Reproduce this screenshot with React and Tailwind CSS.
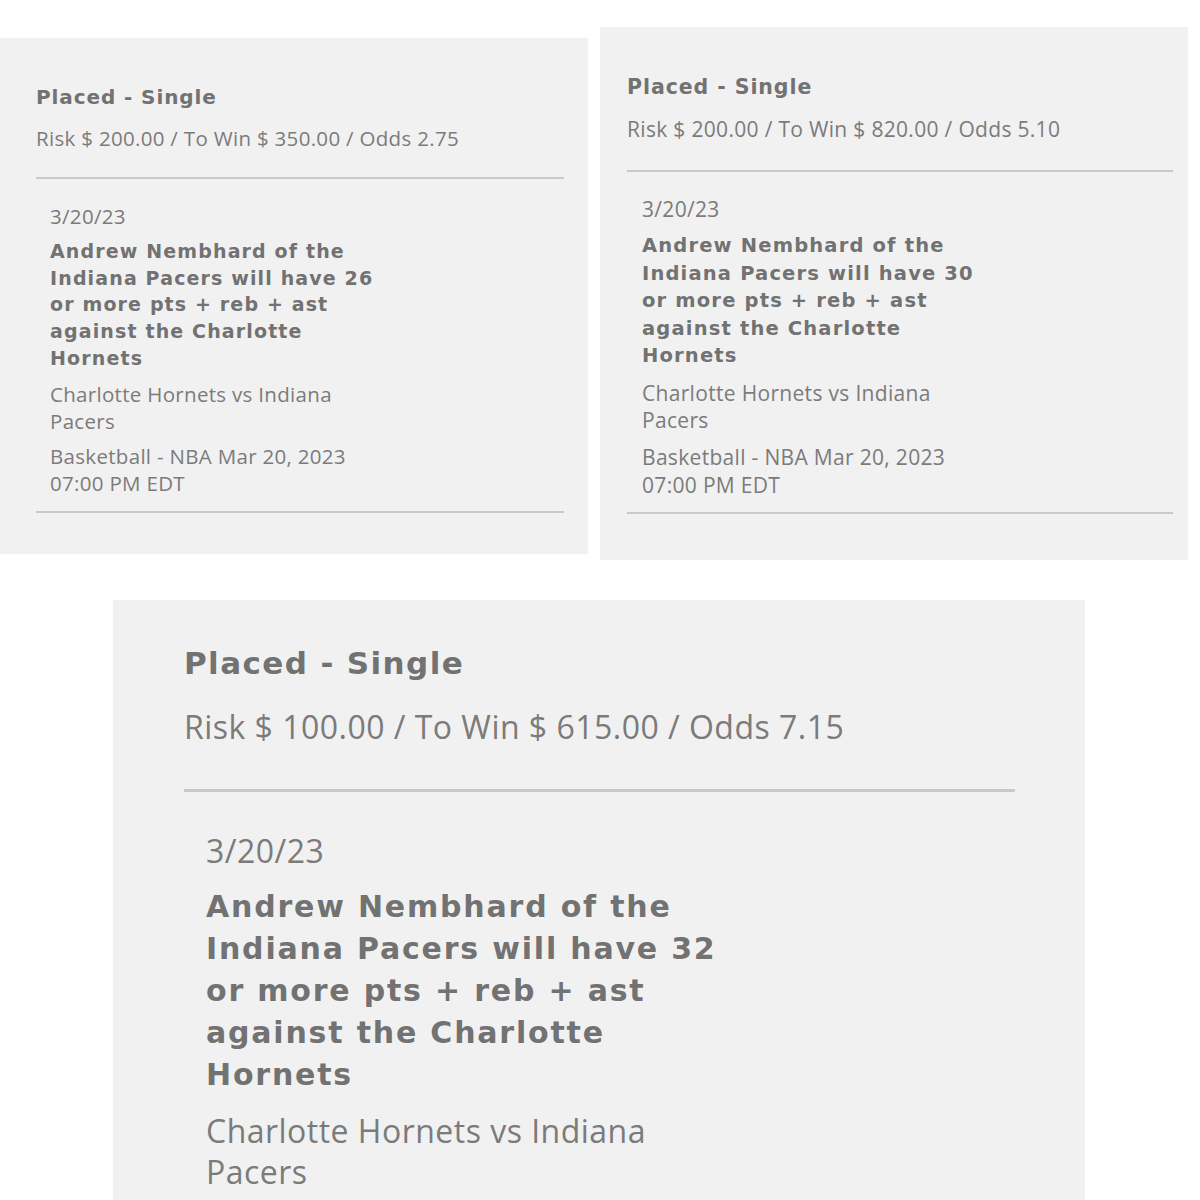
import React from "react";

const slips = [
  {
    wrap: "mt-[38px] w-[588px] h-[516px] pt-[45px] pl-[36px] pr-[24px]",
    head: "text-[20px] leading-[28px]",
    risk: "mt-[13px] text-[20.5px] leading-[28px]",
    rule: "mt-[25px] h-[2px]",
    body: "pl-[14px]",
    date: "mt-[24px] text-[20.5px] leading-[26px]",
    bold: "mt-[9px] text-[19px] leading-[26.7px]",
    match: "mt-[9px] text-[20.5px] leading-[27px]",
    sport: "mt-[8px] text-[20.5px] leading-[27px]",
    rule2: "mt-[14px] h-[2px]",
    risk$: "Risk $ 200.00 / To Win $ 350.00 / Odds 2.75",
    line: "26",
  },
  {
    wrap: "ml-[12px] mt-[27px] w-[588px] h-[533px] pt-[46px] pl-[27px] pr-[15px]",
    head: "text-[20.5px] leading-[28px]",
    risk: "mt-[14px] text-[21px] leading-[28px]",
    rule: "mt-[27px] h-[2px]",
    body: "pl-[15px]",
    date: "mt-[24px] text-[21px] leading-[27px]",
    bold: "mt-[9px] text-[19.5px] leading-[27.5px]",
    match: "mt-[10px] text-[21px] leading-[27px]",
    sport: "mt-[9px] text-[21px] leading-[28px]",
    rule2: "mt-[13px] h-[2px]",
    risk$: "Risk $ 200.00 / To Win $ 820.00 / Odds 5.10",
    line: "30",
  },
];

const big = {
  wrap: "mt-[40px] ml-[113px] w-[972px] h-[600px] pt-[42px] pl-[71px] pr-[70px]",
  head: "text-[31px] leading-[42px]",
  risk: "mt-[22px] text-[32px] leading-[42px]",
  rule: "mt-[41px] h-[3px]",
  body: "pl-[22px]",
  date: "mt-[38px] text-[32px] leading-[42px]",
  bold: "mt-[14px] text-[30px] leading-[42px]",
  match: "mt-[14px] text-[32px] leading-[41px]",
  sport: "mt-[14px] text-[32px] leading-[41px]",
  rule2: "mt-[20px] h-[3px]",
  risk$: "Risk $ 100.00 / To Win $ 615.00 / Odds 7.15",
  line: "32",
};

const regular = "font-['Open_Sans',sans-serif] text-[#7b7b7b] tracking-[0.015em]";
const heavy = "font-['DejaVu_Sans',sans-serif] font-bold text-[#727272]";

function Slip({ s }) {
  const prop = [
    "Andrew Nembhard of the",
    `Indiana Pacers will have ${s.line}`,
    "or more pts + reb + ast",
    "against the Charlotte",
    "Hornets",
  ];
  return (
    <div className={`shrink-0 bg-[#f1f1f1] overflow-hidden ${s.wrap}`}>
      <div className={`${heavy} tracking-[0.045em] ${s.head}`}>Placed - Single</div>
      <div className={`${regular} whitespace-nowrap ${s.risk}`}>{s.risk$}</div>
      <div className={`bg-[#c9c9c9] ${s.rule}`} />
      <div className={s.body}>
        <div className={`${regular} ${s.date}`}>3/20/23</div>
        <div className={`${heavy} tracking-[0.06em] ${s.bold}`}>
          {prop.map((t) => (
            <div key={t} className="whitespace-nowrap">{t}</div>
          ))}
        </div>
        <div className={`${regular} ${s.match}`}>
          <div>Charlotte Hornets vs Indiana</div>
          <div>Pacers</div>
        </div>
        <div className={`${regular} ${s.sport}`}>
          <div>Basketball - NBA Mar 20, 2023</div>
          <div>07:00 PM EDT</div>
        </div>
      </div>
      <div className={`bg-[#c9c9c9] ${s.rule2}`} />
    </div>
  );
}

export default function App() {
  return (
    <div className="w-[1200px] h-[1200px] bg-white overflow-hidden">
      <div className="flex items-start">
        {slips.map((s) => (
          <Slip key={s.line} s={s} />
        ))}
      </div>
      <Slip s={big} />
    </div>
  );
}
